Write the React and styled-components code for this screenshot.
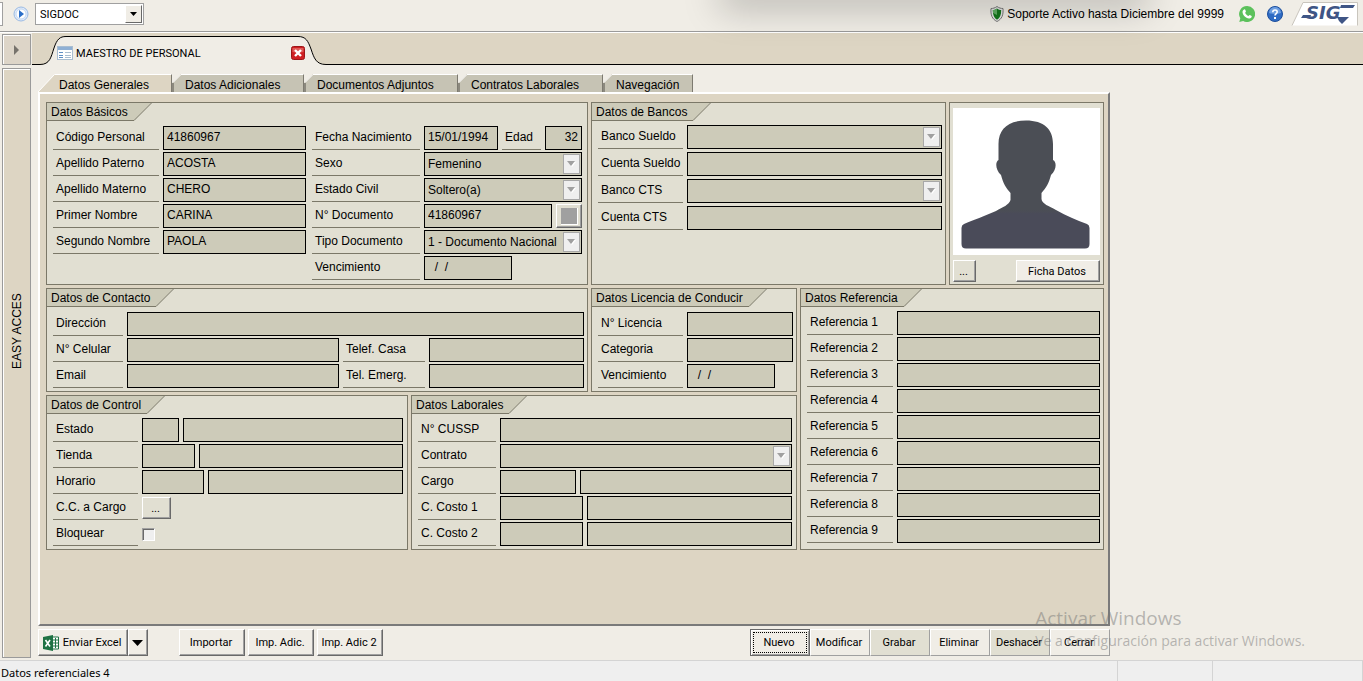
import { useId } from 'react';
import styled, { createGlobalStyle, css } from 'styled-components';

const personal = [
  ['Código Personal', '41860967'],
  ['Apellido Paterno', 'ACOSTA'],
  ['Apellido Materno', 'CHERO'],
  ['Primer Nombre', 'CARINA'],
  ['Segundo Nombre', 'PAOLA'],
];
const referencias = [1, 2, 3, 4, 5, 6, 7, 8, 9];
const subTabs = [
  ['Datos Adicionales', 132],
  ['Documentos Adjuntos', 154],
  ['Contratos Laborales', 145],
  ['Navegación', 90],
];

const Field = ({ label, labelWidth, width, value = '', align, children }) => {
  const id = useId();
  return (
    <Row>
      <Label htmlFor={id} $width={labelWidth}>
        {label}
      </Label>
      <Input id={id} defaultValue={value} $width={width} $align={align} />
      {children}
    </Row>
  );
};

const SelectField = ({ label, labelWidth, value = '' }) => {
  const id = useId();
  return (
    <Row>
      <Label htmlFor={id} $width={labelWidth}>
        {label}
      </Label>
      <SelectBox>
        <select id={id} defaultValue={value}>
          <option>{value}</option>
        </select>
        <Arrow>
          <svg width='9' height='6'>
            <path d='M1 1h8L5 6z' fill='#fff' />
            <path d='M0 0h8L4 5z' fill='#a0a0a0' />
          </svg>
        </Arrow>
      </SelectBox>
    </Row>
  );
};

const Group = ({ title, children }) => (
  <GroupBox>
    <GroupTitle>
      <h2>{title}</h2>
      <svg width='18' height='18'>
        <path d='M0 0h17L0 17.500z' fill='#cdcbb9' />
        <path d='M0 17.500L17.500 0' stroke='#7b7868' fill='none' />
      </svg>
    </GroupTitle>
    {children}
  </GroupBox>
);

const Avatar = () => (
  <svg viewBox='0 0 147 147' role='img' aria-label='Foto'>
    <defs>
      <linearGradient id='body' x1='0' y1='0' x2='0' y2='1'>
        <stop offset='0.700' stopColor='#4b4e55' />
        <stop offset='0.730' stopColor='#4a4b59' />
      </linearGradient>
    </defs>
    <path
      fill='url(#body)'
      d='M73 12.500C55 12.500 45.500 21 45.500 36V52C42 54 42.500 62 48 67C50 75 53 80 57.500 85V92C56 97 50 99 43 103C32 108 20 112 11 116Q8.500 117 8.500 120V136Q8.500 140.500 13 140.500H132Q136.500 140.500 136.500 136V120Q136.500 117 134 116C123 112 114 108 103 102C96 98 89 96 88.500 91V85C93 80 96 75 98 67C103.500 62 104 54 100 52V36C100 21 91 12.500 73 12.500Z'
    />
  </svg>
);

const App = () => {
  return (
    <Window>
      <GlobalStyle />
      <Toolbar>
        <Grip />
        <IconButton aria-label='Ir' $space={6}>
          <svg width='16' height='16'>
            <circle cx='8' cy='8' r='7' fill='#dfeafa' stroke='#9cbbe3' />
            <circle cx='8' cy='8' r='5' fill='#fff' stroke='#c3d7f0' />
            <path d='M6 4l5 4-5 4z' fill='#2b6fc8' />
          </svg>
        </IconButton>
        <ModuleSelect>
          <select aria-label='Módulo' defaultValue='SIGDOC'>
            <option>SIGDOC</option>
          </select>
          <span>
            <svg width='7' height='4'>
              <path d='M0 0h7L3.500 4z' />
            </svg>
          </span>
        </ModuleSelect>
        <Support>
          <svg width='14' height='16' viewBox='0 0 14 16'>
            <path
              d='M7 .5C5 2 3 2.500 1 2.500C.5 9 2 13 7 15.500C12 13 13.500 9 13 2.500C11 2.500 9 2 7 .5Z'
              fill='#e6e6e6'
              stroke='#777'
            />
            <path
              d='M7 2.500C5.500 3.500 4 4 2.800 4C2.800 9 4 12 7 13.800C10 12 11.200 9 11.200 4C10 4 8.500 3.500 7 2.500Z'
              fill='#14771c'
            />
            <path d='M7 2.500C5.500 3.500 4 4 2.800 4L3 7L7 9Z' fill='#5fae62' />
          </svg>
          Soporte Activo hasta Diciembre del 9999
        </Support>
        <IconButton aria-label='WhatsApp' $space={12}>
          <svg width='16' height='16'>
            <path
              d='M8 0A8 8 0 1 1 4.200 15L.3 16L1.300 12.200A8 8 0 0 1 8 0Z'
              fill='#5cc15c'
            />
            <path
              d='M5 3.500C6 3 6.300 3.600 6.900 5.400C7 6 5.900 6.500 6.200 7C7 8.500 8 9.300 9.300 9.900C9.900 10 10.200 8.800 10.800 9L12.700 10C13 11.500 11.500 12.700 10 12.500C6.500 12 3.600 9 3.500 6C3.500 5 4.200 4 5 3.500Z'
              fill='#fff'
            />
          </svg>
        </IconButton>
        <IconButton aria-label='Ayuda' $space={9}>
          <svg width='16' height='16'>
            <circle cx='8' cy='8' r='7.500' fill='#2f6cc4' stroke='#1d4f9c' />
            <path d='M2 7a6 6 0 0 1 12 0q-6 2-12 0z' fill='#6f9fe0' />
            <path
              d='M5.800 6.200C5.800 3.200 10.300 3.300 10.200 6C10.100 7.600 8 7.600 8 9.600'
              fill='none'
              stroke='#fff'
              strokeWidth='1.600'
            />
            <rect x='7' y='11' width='2' height='2' fill='#fff' />
          </svg>
        </IconButton>
        <Logo width='67' height='24' role='img' aria-label='SIG'>
          <path d='M11 .5H65.500V23.500H0Z' fill='#fff' />
          <path d='M0 23.500L11 .5H65.500V23.500' fill='none' stroke='#c9c5bd' />
          <path d='M9 16L11 13H19L18 16ZM49 3H63L61 6H48Z' fill='#3f5585' />
          <path d='M45 15H57L50 22L47 19Z' fill='#3f5585' />
          <text x='14' y='17'>
            SIG
          </text>
        </Logo>
      </Toolbar>

      <Workspace>
        <Sidebar>
          <ExpandButton aria-label='Expandir'>
            <svg width='6' height='10'>
              <path d='M0 0l5 5-5 5z' fill='#77736c' />
            </svg>
          </ExpandButton>
          <SidePanel>EASY ACCES</SidePanel>
        </Sidebar>

        <Main>
          <DocStrip>
            <svg width='34' height='32'>
              <path
                d='M0 31.500H8C18 31.500 19 24 22 15C25 6 28 3.500 34 3.500V32H0Z'
                fill='#f0ede6'
              />
              <path
                d='M0 31.500H8C18 31.500 19 24 22 15C25 6 28 3.500 34 3.500'
                fill='none'
                stroke='#000'
              />
            </svg>
            <DocTab>
              <svg width='16' height='14'>
                <rect x='.5' y='.5' width='15' height='13' fill='#fff' stroke='#a9bdd0' />
                <rect x='1' y='1' width='14' height='3' fill='#8fb0d4' />
                <path d='M2 6.500h4M2 9.500h4M2 11.500h4' stroke='#5f8fc4' />
                <path d='M8 6.500h6M8 9.500h6M8 11.500h6' stroke='#a9bdd0' />
              </svg>
              <span>MAESTRO DE PERSONAL</span>
              <CloseButton aria-label='Cerrar ficha'>
                <svg width='14' height='14'>
                  <rect x='.5' y='.5' width='13' height='13' rx='2' fill='#cf1f22' stroke='#9c1518' />
                  <path d='M1.500 2h11v4q-5 1-11 0z' fill='#de5a58' />
                  <path d='M4 4l6 6M10 4l-6 6' stroke='#fff' strokeWidth='2.400' />
                </svg>
              </CloseButton>
            </DocTab>
            <svg width='32' height='32'>
              <path
                d='M0 3.500C8 3.500 10 8 13 16C16 25 18 31.500 28 31.500H32V32H0Z'
                fill='#f0ede6'
              />
              <path
                d='M0 3.500C8 3.500 10 8 13 16C16 25 18 31.500 28 31.500H32'
                fill='none'
                stroke='#000'
              />
            </svg>
            <StripLine />
          </DocStrip>

          <SubTabs role='tablist'>
            <SubTab role='tab' aria-selected='true' $active $width={134}>
              <svg width='18' height='18'>
                <path d='M0 18L17 0H18V18Z' fill='#ddd5c3' />
                <path d='M0 18L16.500 .5H18' fill='none' stroke='#fff' />
              </svg>
              <span>Datos Generales</span>
            </SubTab>
            {subTabs.map(([name, width]) => (
              <SubTab role='tab' aria-selected='false' key={name} $width={width}>
                <svg width='10' height='18'>
                  <path d='M0 18V9L9 0H10V18Z' fill='#c6c3b4' />
                  <path d='M1 18V9' stroke='#8c897e' strokeWidth='2' />
                  <path d='M1 8.500L9 .5H10' fill='none' stroke='#fff' />
                </svg>
                <span>{name}</span>
              </SubTab>
            ))}
          </SubTabs>

          <Page>
            <Columns $sizes={[542, 355, 155]}>
              <Group title='Datos Básicos'>
                <Fields $right={5} $top={5} $bottom={2} $sizes={[253, 270]}>
                  <Stack>
                    {personal.map(([label, value]) => (
                      <Field key={label} label={label} labelWidth={106} value={value} />
                    ))}
                  </Stack>
                  <Stack>
                    <Row>
                      <Label htmlFor='nacimiento' $width={108}>
                        Fecha Nacimiento
                      </Label>
                      <Input id='nacimiento' defaultValue='15/01/1994' />
                      <Label htmlFor='edad' $width={39}>
                        Edad
                      </Label>
                      <Input id='edad' defaultValue='32' $width={37} $align='right' />
                    </Row>
                    <SelectField label='Sexo' labelWidth={108} value='Femenino' />
                    <SelectField label='Estado Civil' labelWidth={108} value='Soltero(a)' />
                    <Field label='N° Documento' labelWidth={108} value='41860967'>
                      <SquareButton aria-label='Consultar documento'>
                        <i />
                      </SquareButton>
                    </Field>
                    <SelectField
                      label='Tipo Documento'
                      labelWidth={108}
                      value='1 - Documento Nacional'
                    />
                    <Field label='Vencimiento' labelWidth={108} width={88} value='  /  /' />
                  </Stack>
                </Fields>
              </Group>

              <Group title='Datos de Bancos'>
                <Fields>
                  <Stack $gap={3}>
                    <SelectField label='Banco Sueldo' labelWidth={85} />
                    <Field label='Cuenta Sueldo' labelWidth={85} />
                    <SelectField label='Banco CTS' labelWidth={85} />
                    <Field label='Cuenta CTS' labelWidth={85} />
                  </Stack>
                </Fields>
              </Group>

              <PhotoBox>
                <Avatar />
                <PhotoActions>
                  <Button $width={23} $height={22} $muted>
                    ...
                  </Button>
                  <Button $width={84} $height={22}>
                    Ficha Datos
                  </Button>
                </PhotoActions>
              </PhotoBox>
            </Columns>

            <Columns $sizes={[751, 304]}>
              <Stack $gap={3}>
                <Columns $sizes={[542, 206]}>
                  <Group title='Datos de Contacto'>
                    <Fields $top={5}>
                      <Stack>
                        <Field label='Dirección' labelWidth={70} />
                        <Field label='N° Celular' labelWidth={70}>
                          <Label htmlFor='casa' $width={82}>
                            Telef. Casa
                          </Label>
                          <Input id='casa' $width={155} />
                        </Field>
                        <Field label='Email' labelWidth={70}>
                          <Label htmlFor='emergencia' $width={82}>
                            Tel. Emerg.
                          </Label>
                          <Input id='emergencia' $width={155} />
                        </Field>
                      </Stack>
                    </Fields>
                  </Group>
                  <Group title='Datos Licencia de Conducir'>
                    <Fields $top={5}>
                      <Stack>
                        <Field label='N° Licencia' labelWidth={85} />
                        <Field label='Categoria' labelWidth={85} />
                        <Field label='Vencimiento' labelWidth={85} width={88} value='  /  /' />
                      </Stack>
                    </Fields>
                  </Group>
                </Columns>

                <Columns $sizes={[362, 386]}>
                  <Group title='Datos de Control'>
                    <Fields $right={4}>
                      <Stack>
                        <Field label='Estado' labelWidth={85} width={37}>
                          <Input aria-label='Descripción estado' />
                        </Field>
                        <Field label='Tienda' labelWidth={85} width={53}>
                          <Input aria-label='Descripción tienda' />
                        </Field>
                        <Field label='Horario' labelWidth={85} width={62}>
                          <Input aria-label='Descripción horario' />
                        </Field>
                        <Row>
                          <Label as='span' $width={85}>
                            C.C. a Cargo
                          </Label>
                          <Button $width={29} $height={22} $muted aria-label='C.C. a Cargo'>
                            ...
                          </Button>
                        </Row>
                        <Row>
                          <Label htmlFor='bloquear' $width={85}>
                            Bloquear
                          </Label>
                          <Check type='checkbox' id='bloquear' />
                        </Row>
                      </Stack>
                    </Fields>
                  </Group>
                  <Group title='Datos Laborales'>
                    <Fields $right={4}>
                      <Stack>
                        <Field label='N° CUSSP' labelWidth={78} />
                        <SelectField label='Contrato' labelWidth={78} />
                        <Field label='Cargo' labelWidth={78} width={76}>
                          <Input aria-label='Descripción cargo' />
                        </Field>
                        <Field label='C. Costo 1' labelWidth={78} width={83}>
                          <Input aria-label='Descripción costo 1' />
                        </Field>
                        <Field label='C. Costo 2' labelWidth={78} width={83}>
                          <Input aria-label='Descripción costo 2' />
                        </Field>
                      </Stack>
                    </Fields>
                  </Group>
                </Columns>
              </Stack>

              <Group title='Datos Referencia'>
                <Fields>
                  <Stack>
                    {referencias.map((n) => (
                      <Field key={n} label={`Referencia ${n}`} labelWidth={86} />
                    ))}
                  </Stack>
                </Fields>
              </Group>
            </Columns>
          </Page>

          <Actions>
            <ActionGroup>
              <Button $width={90}>
                <svg width='16' height='16'>
                  <path d='M9 2h6.500v12H9z' fill='#fff' stroke='#1f7244' />
                  <path d='M10 5h5M10 8h5M10 11h5M12.500 3v10' stroke='#1f7244' />
                  <path d='M0 2L10 0V16L0 14Z' fill='#1f7244' />
                  <path d='M2.500 5L7 11.500M7 5L2.500 11.500' stroke='#fff' strokeWidth='1.600' />
                </svg>
                Enviar Excel
              </Button>
              <Button $width={20} aria-label='Más formatos'>
                <svg width='11' height='6'>
                  <path d='M0 0h11L5.500 6z' />
                </svg>
              </Button>
            </ActionGroup>
            <ActionGroup $gap={3}>
              <Button $width={66}>Importar</Button>
              <Button $width={66}>Imp. Adic.</Button>
              <Button $width={66}>Imp. Adic 2</Button>
            </ActionGroup>
            <ActionGroup $end>
              <Button $width={60} $focused>
                Nuevo
              </Button>
              <Button $width={60} $flat>
                Modificar
              </Button>
              <Button $width={60} $flat $muted>
                Grabar
              </Button>
              <Button $width={60} $flat>
                Eliminar
              </Button>
              <Button $width={60} $flat $muted>
                Deshacer
              </Button>
              <Button $width={60} $flat>
                Cerrar
              </Button>
            </ActionGroup>
          </Actions>
        </Main>
      </Workspace>

      <StatusBar>
        <span>Datos referenciales 4</span>
        <StatusCell $width={94} />
        <StatusCell $width={149} />
        <StatusCell $width={0} />
      </StatusBar>

      <TopShadow />
      <Watermark>
        <p>Activar Windows</p>
        <span>Ve a Configuración para activar Windows.</span>
      </Watermark>
    </Window>
  );
};

const GlobalStyle = createGlobalStyle`
  * {
    box-sizing: border-box;
  }
  body {
    margin: 0;
    background: #f0ede6;
    color: #000;
    font-family: 'Liberation Sans', Arial, sans-serif;
    font-size: 12px;
  }
  svg {
    display: block;
    flex: none;
  }
  button, input, select {
    font: inherit;
    color: inherit;
    margin: 0;
  }
`;

const Window = styled.div`
  position: relative;
  display: flex;
  flex-direction: column;
  min-height: 100vh;
  overflow: hidden;
`;

const Toolbar = styled.header`
  display: flex;
  align-items: center;
  height: 33px;
  padding: 0 4px 4px 0;
  border-bottom: 1px solid #fff;
  box-shadow: inset 0 -1px #9a9a9a;
`;

const Grip = styled.div`
  width: 3px;
  height: 24px;
  margin-right: 10px;
  border: 1px solid #a0a0a0;
  border-left: 0;
  background: #fff;
`;

const IconButton = styled.button`
  margin-right: ${({ $space }) => $space}px;
  padding: 0;
  border: 0;
  background: none;
`;

const ModuleSelect = styled.div`
  position: relative;
  width: 109px;
  height: 22px;
  select {
    width: 100%;
    height: 100%;
    padding: 0 20px 0 4px;
    border: 1px solid #a0a0a0;
    background: #fff;
    appearance: none;
    font-family: Roboto, sans-serif;
    font-size: 11px;
  }
  span {
    position: absolute;
    top: 2px;
    right: 2px;
    bottom: 2px;
    width: 17px;
    display: flex;
    align-items: center;
    justify-content: center;
    background: #f0ede6;
    border: 1px solid #fff;
    border-right-color: #696969;
    border-bottom-color: #696969;
    pointer-events: none;
  }
`;

const Support = styled.div`
  display: flex;
  align-items: center;
  gap: 3px;
  margin-left: auto;
  margin-right: 15px;
  white-space: nowrap;
`;

const Logo = styled.svg`
  overflow: visible;
  text {
    fill: #3f5585;
    font-family: 'DejaVu Sans', sans-serif;
    font-size: 18px;
    font-weight: bold;
    font-style: italic;
  }
`;

const Workspace = styled.div`
  display: flex;
  flex: 1;
`;

const Sidebar = styled.aside`
  display: flex;
  flex-direction: column;
  gap: 3px;
  width: 32px;
  padding: 1px 1px 2px 2px;
`;

const bevel = css`
  border: 1px solid #9a9a9a;
  box-shadow: inset 1px 1px #fff;
`;

const ExpandButton = styled.button`
  ${bevel}
  display: flex;
  align-items: center;
  justify-content: center;
  height: 31px;
  padding: 0;
  background: #ddd5c8;
`;

/* turned upside down so that the title reads from the bottom up */
const SidePanel = styled.div`
  ${bevel}
  flex: 1;
  display: flex;
  align-items: center;
  justify-content: center;
  padding-top: 64px;
  background: #ddd5c3;
  box-shadow: inset -1px -1px #fff;
  writing-mode: vertical-rl;
  transform: rotate(180deg);
`;

const Main = styled.main`
  flex: 1;
  min-width: 0;
  display: flex;
  flex-direction: column;
`;

const DocStrip = styled.div`
  display: flex;
  height: 32px;
  background: #ddd5c3;
`;

const DocTab = styled.div`
  position: relative;
  display: flex;
  align-items: center;
  width: 232px;
  margin-top: 3px;
  padding: 4px 1px 0 0;
  border-top: 1px solid #000;
  background: #f0ede6;
  font-family: Roboto, sans-serif;
  font-size: 11px;
  > svg {
    margin-left: -9px;
  }
  span {
    margin-left: 3px;
  }
`;

const CloseButton = styled.button`
  margin-left: auto;
  margin-right: -8px;
  padding: 0;
  border: 0;
  background: none;
`;

const StripLine = styled.div`
  flex: 1;
  border-bottom: 1px solid #000;
`;

const SubTabs = styled.div`
  display: flex;
  padding: 9px 0 0 6px;
`;

const SubTab = styled.button`
  display: flex;
  width: ${({ $width }) => $width}px;
  height: 18px;
  padding: 0;
  border: 0;
  background: none;
  text-align: left;
  white-space: nowrap;
  span {
    flex: 1;
    height: 18px;
    padding-left: 3px;
    line-height: 20px;
    background: ${({ $active }) => ($active ? '#ddd5c3' : '#c6c3b4')};
    border-top: 1px solid #fff;
    border-right: 1px solid #7d7a70;
  }
`;

const Page = styled.div`
  flex: 1;
  display: flex;
  flex-direction: column;
  gap: 3px;
  max-width: 1072px;
  margin-left: 6px;
  padding: 8px 4px 8px 6px;
  background: #ddd5c3;
  border: 2px solid #fff;
  border-right-color: #7a7a7a;
  border-bottom-color: #7a7a7a;
`;

const columns = ({ $sizes = [1] }) => $sizes.map((n) => `minmax(0, ${n}fr)`).join(' ');

const Columns = styled.div`
  display: grid;
  grid-template-columns: ${columns};
  gap: 3px;
`;

const GroupBox = styled.section`
  background: #e1dfd2;
  border: 1px solid #7b7868;
`;

const GroupTitle = styled.header`
  display: flex;
  h2 {
    height: 18px;
    margin: 0;
    padding: 0 6px 0 4px;
    font-size: 12px;
    font-weight: normal;
    line-height: 18px;
    white-space: nowrap;
    background: #cdcbb9;
    border-bottom: 1px solid #7b7868;
  }
`;

const Fields = styled.div`
  display: grid;
  grid-template-columns: ${columns};
  gap: 6px;
  padding: ${({ $top = 4, $right = 3, $bottom = 3 }) => `${$top}px ${$right}px ${$bottom}px 6px`};
`;

const Stack = styled.div`
  display: flex;
  flex-direction: column;
  gap: ${({ $gap = 2 }) => $gap}px;
`;

const Row = styled.div`
  display: flex;
  align-items: center;
  gap: 4px;
  height: 24px;
`;

const Label = styled.label`
  flex: none;
  width: ${({ $width }) => $width}px;
  height: 24px;
  padding-left: 3px;
  line-height: 22px;
  white-space: nowrap;
  border-bottom: 1px solid #7b7868;
`;

const Input = styled.input`
  flex: ${({ $width }) => ($width ? `0 0 ${$width}px` : '1')};
  width: 0;
  height: 24px;
  padding: 0 3px 2px;
  text-align: ${({ $align = 'left' }) => $align};
  background: #cdcbb9;
  border: 1px solid #000;
  border-radius: 0;
  outline: none;
`;

const SelectBox = styled.div`
  position: relative;
  flex: 1;
  min-width: 0;
  select {
    display: block;
    width: 100%;
    height: 24px;
    padding: 0 19px 0 3px;
    background: #cdcbb9;
    border: 1px solid #000;
    border-radius: 0;
    appearance: none;
  }
`;

const Arrow = styled.span`
  position: absolute;
  top: 2px;
  right: 2px;
  width: 17px;
  height: 20px;
  display: flex;
  align-items: center;
  justify-content: center;
  background: #efefef;
  border: 1px solid #a8a8a8;
  pointer-events: none;
`;

const Button = styled.button`
  display: flex;
  align-items: center;
  justify-content: center;
  gap: 4px;
  width: ${({ $width }) => $width}px;
  height: ${({ $height = 27 }) => $height}px;
  padding: 0 2px 0 0;
  font-family: Roboto, sans-serif;
  font-size: 11px;
  white-space: nowrap;
  background: ${({ $muted }) => ($muted ? '#e1dfd2' : '#f0ede6')};
  border: 1px solid #fff;
  border-right-color: ${({ $flat }) => ($flat ? '#a0a0a0' : '#696969')};
  border-bottom-color: ${({ $flat }) => ($flat ? '#a0a0a0' : '#696969')};
  box-shadow: ${({ $flat }) => ($flat ? 'none' : 'inset -1px -1px #a0a0a0')};
  ${({ $focused }) =>
    $focused &&
    css`
      border-color: #696969;
      box-shadow: inset 1px 1px #fff, inset -1px -1px #a0a0a0;
      outline: 1px dotted #000;
      outline-offset: -4px;
    `}
`;

const SquareButton = styled.button`
  display: flex;
  align-items: center;
  justify-content: center;
  width: 26px;
  height: 24px;
  padding: 0;
  background: #e1dfd2;
  border: 1px solid #fff;
  border-right-color: #696969;
  border-bottom-color: #696969;
  box-shadow: inset -1px -1px #a0a0a0;
  i {
    width: 17px;
    height: 17px;
    background: #a0a0a0;
    border-right: 1px solid #fff;
    border-bottom: 1px solid #fff;
  }
`;

const Check = styled.input`
  appearance: none;
  width: 13px;
  height: 13px;
  background: #efefef;
  border: 1px solid #fff;
  border-top-color: #a0a0a0;
  border-left-color: #a0a0a0;
  box-shadow: inset 1px 1px #696969;
`;

const PhotoBox = styled(GroupBox)`
  padding: 5px 3px 2px;
  > svg {
    width: 100%;
    height: auto;
    background: #fff;
  }
`;

const PhotoActions = styled.div`
  display: flex;
  justify-content: space-between;
  margin-top: 5px;
`;

const Actions = styled.footer`
  display: flex;
  gap: 31px;
  max-width: 1072px;
  margin: 3px 0 4px 6px;
`;

const ActionGroup = styled.div`
  display: flex;
  gap: ${({ $gap = 0 }) => $gap}px;
  margin-left: ${({ $end }) => ($end ? 'auto' : '0')};
`;

const StatusBar = styled.footer`
  display: flex;
  height: 21px;
  padding-left: 1px;
  line-height: 24px;
  font-family: 'Noto Sans', sans-serif;
  font-size: 11px;
  background: #efefef;
  border-top: 1px solid #d4d4d4;
  > span {
    flex: 1;
  }
`;

const StatusCell = styled.div`
  width: ${({ $width }) => $width + 1}px;
  border-left: 1px solid #d4d4d4;
`;

const TopShadow = styled.div`
  position: absolute;
  top: -20px;
  left: 724px;
  width: 420px;
  height: 20px;
  box-shadow: 0 4px 36px 4px rgba(0, 0, 0, 0.25);
  pointer-events: none;
`;

const Watermark = styled.div`
  position: absolute;
  right: 58px;
  bottom: 29px;
  color: rgba(120, 120, 120, 0.5);
  font-family: 'Open Sans', sans-serif;
  font-size: 14px;
  line-height: 22px;
  pointer-events: none;
  p {
    margin: 0;
    font-size: 19px;
    line-height: 24px;
  }
`;

export default App;
